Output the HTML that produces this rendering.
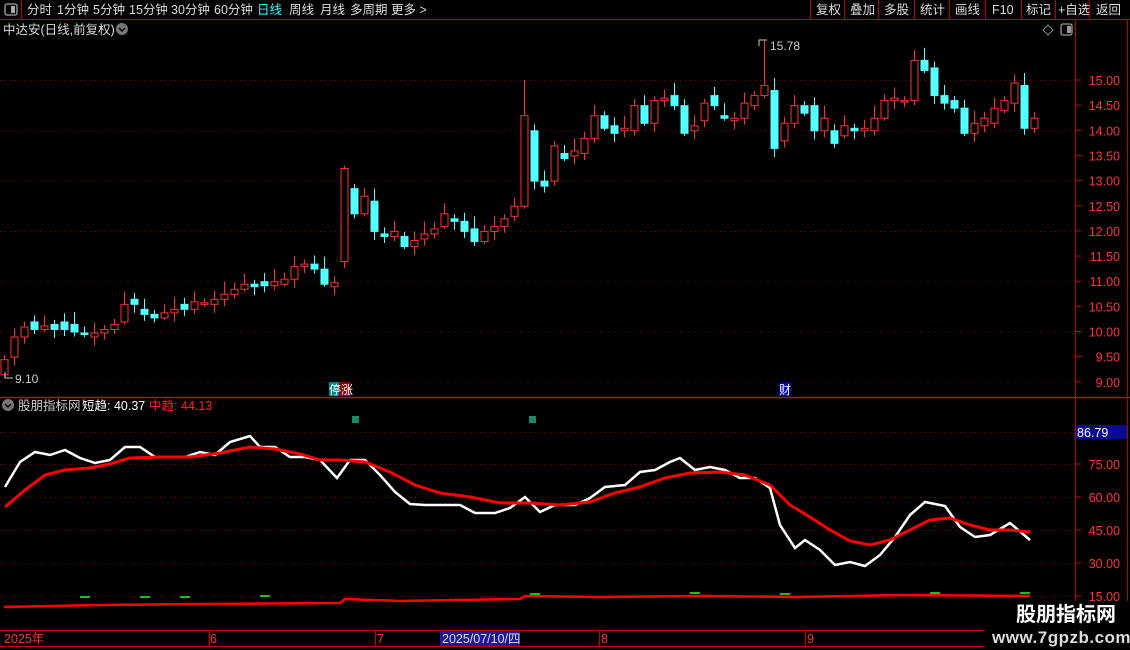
<!DOCTYPE html>
<html><head><meta charset="utf-8">
<style>
body{margin:0;background:#000;width:1130px;height:650px;overflow:hidden;font-family:"Liberation Sans","Noto Sans CJK SC",sans-serif;color:#ddd}
svg{position:absolute;left:0;top:0}
.t{font-family:"Liberation Sans","Noto Sans CJK SC",sans-serif}
</style></head><body>
<svg id="s" width="1130" height="650" xmlns="http://www.w3.org/2000/svg">
<line x1="0" y1="19.5" x2="1130" y2="19.5" stroke="#b00" />
<line x1="21.5" y1="0" x2="21.5" y2="19" stroke="#b00"/>
<rect x="5" y="4" width="12" height="11" rx="2" fill="none" stroke="#aaa" stroke-width="1.3"/>
<rect x="11" y="6" width="4" height="7" fill="#aaa"/>
<g class="t" font-size="12.5" fill="#ddd">
<text x="27" y="14">分时</text><text x="57" y="14">1分钟</text><text x="93" y="14">5分钟</text><text x="129" y="14">15分钟</text><text x="171" y="14">30分钟</text><text x="214" y="14">60分钟</text>
<text x="257" y="14" fill="#3ff">日线</text><text x="289" y="14">周线</text><text x="320" y="14">月线</text><text x="350" y="14">多周期</text><text x="391" y="14">更多 &gt;</text>
<text x="816" y="14">复权</text><text x="850" y="14">叠加</text><text x="884" y="14">多股</text><text x="920" y="14">统计</text><text x="955" y="14">画线</text><text x="992" y="14">F10</text><text x="1026" y="14">标记</text><text x="1058" y="14">+自选</text><text x="1096" y="14">返回</text>
</g>
<g stroke="#b00"><line x1="810.5" y1="0" x2="810.5" y2="19"/><line x1="844.5" y1="0" x2="844.5" y2="19"/><line x1="878.5" y1="0" x2="878.5" y2="19"/><line x1="914.5" y1="0" x2="914.5" y2="19"/><line x1="949.5" y1="0" x2="949.5" y2="19"/><line x1="985.5" y1="0" x2="985.5" y2="19"/><line x1="1021.5" y1="0" x2="1021.5" y2="19"/><line x1="1055.5" y1="0" x2="1055.5" y2="19"/><line x1="1089.5" y1="0" x2="1089.5" y2="19"/></g>
<text x="3" y="34" class="t" font-size="12.5" fill="#ddd">中达安(日线,前复权)</text>
<circle cx="122" cy="29" r="6" fill="#777"/><path d="M119 28l3 3 3-3" stroke="#000" stroke-width="1.5" fill="none"/>
<path d="M1048 25l5 5-5 5-5-5z" fill="none" stroke="#888"/>
<rect x="1061" y="24" width="11" height="11" rx="2" fill="none" stroke="#999" stroke-width="1.3"/><rect x="1067" y="26" width="4" height="7" fill="#999"/>
<line x1="1075.5" y1="20" x2="1075.5" y2="650" stroke="#b00"/>
<line x1="1127.5" y1="20" x2="1127.5" y2="630" stroke="#b00"/>
<line x1="0" y1="397.5" x2="1130" y2="397.5" stroke="#c00" stroke-width="1.5"/>
<line x1="0" y1="630.5" x2="985" y2="630.5" stroke="#c00"/>
<line x1="0" y1="646.5" x2="985" y2="646.5" stroke="#c00"/>
<g id="g"></g>
<g class="t" font-size="12.5" fill="#f33" id="ax"></g>
<circle cx="8" cy="405" r="6" fill="#777"/><path d="M5 404l3 3 3-3" stroke="#000" stroke-width="1.5" fill="none"/>
<text x="18" y="410" class="t" font-size="12.5" fill="#ccc">股朋指标网</text>
<text x="82" y="410" class="t" font-size="12.5" fill="#fff">短趋: 40.37</text>
<text x="149" y="410" class="t" font-size="12.5" fill="#f22">中趋: 44.13</text>
<rect x="352" y="416" width="7" height="7" fill="#1a8a6a"/><rect x="529" y="416" width="7" height="7" fill="#1a8a6a"/>
<rect x="1076" y="425" width="51" height="14" fill="#0a0a90"/><text x="1077" y="437" class="t" font-size="12.5" fill="#fff">86.79</text>
<rect x="329" y="382" width="10" height="14" fill="#088"/><rect x="339" y="382" width="12" height="14" fill="#800"/>
<text x="329" y="394" class="t" font-size="12" fill="#fff">停涨</text>
<rect x="779" y="382" width="12" height="14" fill="#00a"/><text x="779" y="394" class="t" font-size="12" fill="#fff">财</text>
<text x="15" y="383" class="t" font-size="12" fill="#ccc">9.10</text><path d="M5 372v6h8" stroke="#ccc" fill="none"/>
<text x="770" y="50" class="t" font-size="12" fill="#ccc">15.78</text><path d="M759 46v-6h8" stroke="#ccc" fill="none"/>
<g class="t" font-size="12.5" fill="#f33"><text x="4" y="643">2025年</text><text x="210" y="643">6</text><text x="377" y="643">7</text><text x="601" y="643">8</text><text x="807" y="643">9</text></g>
<g stroke="#c00"><line x1="209.5" y1="631" x2="209.5" y2="646"/><line x1="375.5" y1="631" x2="375.5" y2="646"/><line x1="599.5" y1="631" x2="599.5" y2="646"/><line x1="805.5" y1="631" x2="805.5" y2="646"/></g>
<rect x="440" y="631" width="80" height="15" fill="#1a1a9a"/><text x="442" y="643" class="t" font-size="12.5" fill="#ddd">2025/07/10/四</text>
<rect x="985" y="601" width="145" height="49" fill="#000"/>
<text x="1016" y="621" class="t" font-size="20" font-weight="bold" fill="#fff">股朋指标网</text>
<text x="992" y="643" class="t" font-size="17" font-weight="bold" fill="#ddd" letter-spacing="0.5">www.7gpzb.com</text>
</svg>
<script>
var NS="http://www.w3.org/2000/svg",g=document.getElementById('g'),ax=document.getElementById('ax');
function el(n,a,p){var e=document.createElementNS(NS,n);for(var k in a)e.setAttribute(k,a[k]);(p||g).appendChild(e);return e;}
function py(p){return 80+(15-p)*50.3;}
for(var p=9;p<=15;p++){el('line',{x1:0,y1:py(p)+.5,x2:1075,y2:py(p)+.5,stroke:'#900','stroke-dasharray':'1 4'});}
for(var p=9;p<=15;p+=0.5){var y=py(p);el('line',{x1:1075,y1:y,x2:1081,y2:y,stroke:'#c00'});var t=el('text',{x:1120,y:y+5,'text-anchor':'end'},ax);t.textContent=p.toFixed(2);}
function ly(v){return 464+(75-v)*2.2;}
[75,60,45,30,15].forEach(function(v){var y=ly(v);el('line',{x1:0,y1:y+.5,x2:1075,y2:y+.5,stroke:'#900','stroke-dasharray':'1 4'});el('line',{x1:1075,y1:y,x2:1081,y2:y,stroke:'#c00'});var t=el('text',{x:1120,y:y+5,'text-anchor':'end'},ax);t.textContent=v.toFixed(2);});
el('line',{x1:0,y1:432.5,x2:1075,y2:432.5,stroke:'#900','stroke-dasharray':'1 4'});
var d=[[9.15,9.45],[9.5,9.9],[9.9,10.1],[10.2,10.05],[10.05,10.12],[10.15,10.05],[10.2,10.05],[10.15,10.0],[9.98,9.95],[9.9,9.98],[9.98,10.05],[10.05,10.15],[10.2,10.55],[10.65,10.55],[10.45,10.35],[10.35,10.28],[10.28,10.38],[10.38,10.45],[10.55,10.45],[10.45,10.6],[10.55,10.58],[10.55,10.65],[10.65,10.75],[10.75,10.85],[10.85,10.95],[10.95,10.9],[11.0,10.92],[10.92,11.0],[10.95,11.05],[11.05,11.3],[11.3,11.35],[11.35,11.25],[11.25,10.95],[10.9,10.98],[11.4,13.25],[12.85,12.35],[12.35,12.7],[12.6,12.0],[11.95,11.9],[11.9,12.0],[11.9,11.7],[11.7,11.82],[11.85,11.95],[11.95,12.05],[12.1,12.35],[12.25,12.2],[12.2,12.0],[12.05,11.8],[11.8,12.0],[12.0,12.1],[12.1,12.25],[12.3,12.5],[12.5,14.3],[14.0,13.0],[13.0,12.9],[13.0,13.7],[13.55,13.45],[13.5,13.6],[13.55,13.85],[13.85,14.3],[14.3,14.05],[14.1,13.95],[14.0,14.05],[14.0,14.5],[14.5,14.15],[14.15,14.6],[14.6,14.65],[14.7,14.5],[14.5,13.95],[14.0,14.1],[14.2,14.55],[14.7,14.5],[14.3,14.25],[14.2,14.25],[14.25,14.55],[14.5,14.7],[14.7,14.9],[14.8,13.65],[13.8,14.15],[14.15,14.5],[14.5,14.35],[14.5,14.0],[14.0,14.25],[14.0,13.75],[13.9,14.1],[14.05,14.0],[14.0,14.05],[14.0,14.25],[14.25,14.6],[14.6,14.65],[14.6,14.6],[14.6,15.4],[15.4,15.2],[15.25,14.7],[14.7,14.55],[14.6,14.45],[14.45,13.95],[13.95,14.15],[14.1,14.25],[14.15,14.45],[14.4,14.6],[14.55,14.95],[14.9,14.05],[14.05,14.25]];
var hi={34:13.3,52:15.0,76:15.78,91:15.6,11:10.25,2:10.2};var lo={0:9.1};
for(var i=0;i<d.length;i++){var x=4+i*10,o=d[i][0],c=d[i][1];var h=hi[i]||Math.max(o,c)+0.08+((i*7)%5)*0.04,l=lo[i]||Math.min(o,c)-0.06-((i*3)%4)*0.04;
var up=c>=o,col=up?'#ff3232':'#54ffff';
el('line',{x1:x+.5,y1:py(h),x2:x+.5,y2:py(l),stroke:col});
var y1=py(Math.max(o,c)),y2=py(Math.min(o,c));if(y2-y1<1.5)y2=y1+1.5;
if(up)el('rect',{x:x-3,y:y1+.5,width:7,height:y2-y1,fill:'#000',stroke:col});else el('rect',{x:x-3.5,y:y1,width:8,height:y2-y1+1,fill:col});}
var W="5,487 20,462 35,452 50,455 65,450 80,458 95,463 110,460 125,447 140,447 155,457 170,457 185,457 200,452 215,455 230,442 250,436 260,447 275,447 290,457 305,457 320,460 337,478 350,460 365,460 380,475 395,492 410,504 425,505 440,505 460,505 475,513 495,513 510,508 525,497 540,512 555,505 575,505 590,498 605,487 625,485 640,472 655,470 670,462 680,458 695,470 710,467 725,470 740,478 755,478 770,488 780,525 795,548 805,540 820,550 835,565 850,562 865,566 880,555 895,537 910,515 925,502 945,506 960,527 975,537 990,535 1010,523 1030,540";
var R="5,507 25,490 45,475 65,470 90,468 110,464 130,458 160,457 190,457 220,453 250,447 275,449 300,454 320,460 340,460 365,462 390,472 415,485 440,493 470,497 500,503 530,503 560,505 590,502 615,493 640,487 665,478 690,473 720,472 745,475 770,485 790,505 810,517 830,530 850,541 870,545 890,540 910,530 930,520 950,518 970,525 990,530 1010,530 1030,532";
el('polyline',{points:W,fill:'none',stroke:'#fff','stroke-width':2.5});
el('polyline',{points:R,fill:'none',stroke:'#f00','stroke-width':3});
el('polyline',{points:"4,607 100,605 200,604 340,603 345,599 400,601 520,599 525,596 600,597 700,596 800,597 900,595 1030,596",fill:'none',stroke:'#f00','stroke-width':2.5});
[[80,598],[140,598],[180,598],[260,597],[530,595],[690,594],[780,595],[930,594],[1020,594]].forEach(function(p){el('line',{x1:p[0],y1:p[1]-1,x2:p[0]+10,y2:p[1]-1,stroke:'#2f2','stroke-width':1.5});});
</script>
</body></html>
